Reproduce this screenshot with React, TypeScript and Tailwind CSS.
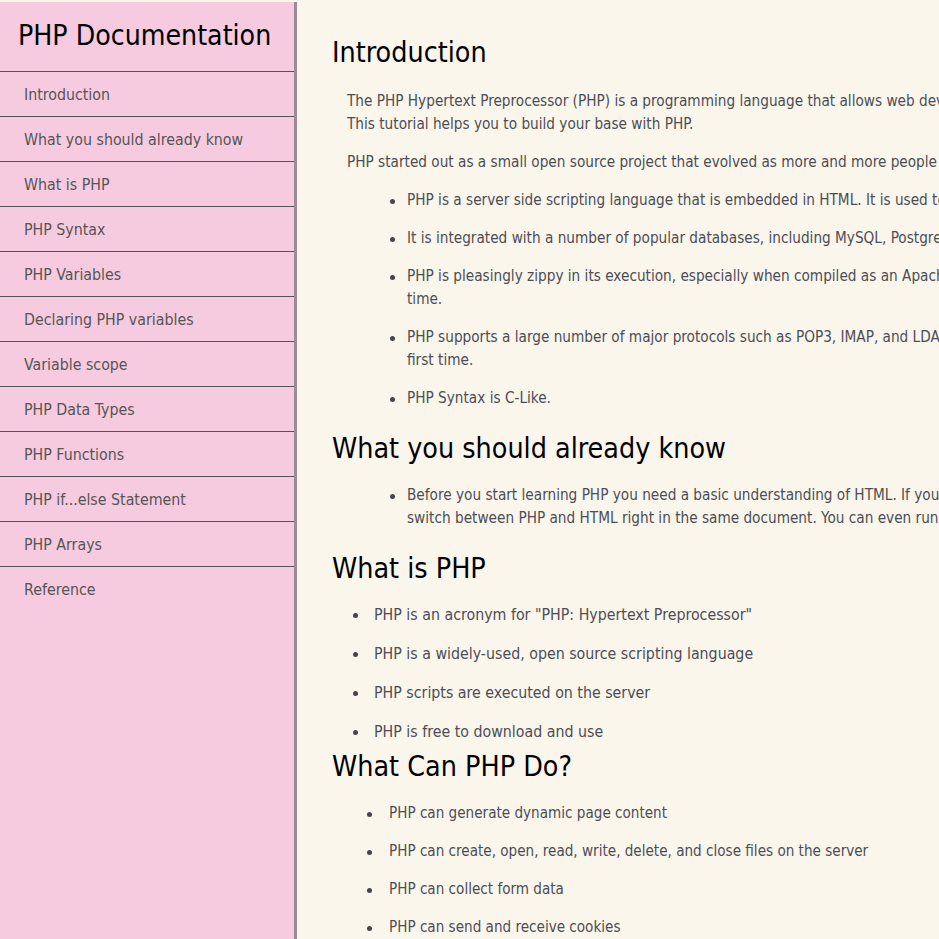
import React from "react";

const navItems = [
  "Introduction",
  "What you should already know",
  "What is PHP",
  "PHP Syntax",
  "PHP Variables",
  "Declaring PHP variables",
  "Variable scope",
  "PHP Data Types",
  "PHP Functions",
  "PHP if...else Statement",
  "PHP Arrays",
  "Reference",
];

function Item({
  col,
  className,
  children,
}: {
  col: string;
  className?: string;
  children: React.ReactNode;
}) {
  return (
    <li className={`flex ${className ?? ""}`}>
      <span className={`${col} shrink-0`}>
        <span className="mt-[10px] block h-[5px] w-[5px] rounded-full bg-[#45454d]" />
      </span>
      <span>{children}</span>
    </li>
  );
}

export default function App() {
  return (
    <div
      className="flex h-[939px] w-[939px] overflow-hidden bg-[#faf6ec]"
      style={{ fontFamily: '"DejaVu Sans Condensed", "DejaVu Sans", sans-serif' }}
    >
      <nav className="mt-[2px] w-[297px] shrink-0 border-r-[3px] border-[#9b8b98] bg-[#f6cbe0]">
        <header className="flex h-[69px] items-center pl-[18px] text-[28.2px] text-black">
          PHP Documentation
        </header>
        {navItems.map((item) => (
          <a
            key={item}
            href="#"
            className="flex h-[45px] items-center border-t border-[#55535a] pl-[24px] pt-[2px] text-[15.8px] text-[#555]"
          >
            {item}
          </a>
        ))}
      </nav>

      <main className="w-[1400px] shrink-0 pl-[35px] pt-[35px] text-[#4d4d55]">
        <section>
          <h2 className="text-[28.4px] leading-[35px] text-black">Introduction</h2>
          <div className="whitespace-nowrap pl-[15px] pt-[20px] text-[15.2px] leading-[23px]">
            <p>
              The PHP Hypertext Preprocessor (PHP) is a programming language that allows web developers to create dynamic content that interacts with databases.
              <br />
              This tutorial helps you to build your base with PHP.
            </p>
            <p className="mt-[15px]">
              PHP started out as a small open source project that evolved as more and more people found out how useful it was.
            </p>
            <ul className="mt-[15px] pl-[43px]">
              <Item col="w-[17px]" className="mb-[15px]">
                PHP is a server side scripting language that is embedded in HTML. It is used to manage dynamic content, databases, session tracking, even build entire e-commerce sites.
              </Item>
              <Item col="w-[17px]" className="mb-[15px]">
                It is integrated with a number of popular databases, including MySQL, PostgreSQL, Oracle, Sybase, Informix, and Microsoft SQL Server.
              </Item>
              <Item col="w-[17px]" className="mb-[15px]">
                PHP is pleasingly zippy in its execution, especially when compiled as an Apache module on the Unix side. The MySQL server, once started, executes even very complex queries with huge result sets in record-setting
                <br />
                time.
              </Item>
              <Item col="w-[17px]" className="mb-[15px]">
                PHP supports a large number of major protocols such as POP3, IMAP, and LDAP. PHP4 added support for Java and distributed object architectures (COM and CORBA), making n-tier development a possibility for the
                <br />
                first time.
              </Item>
              <Item col="w-[17px]">PHP Syntax is C-Like.</Item>
            </ul>
          </div>
        </section>

        <section className="mt-[21px]">
          <h2 className="text-[28.4px] leading-[35px] text-black">What you should already know</h2>
          <div className="whitespace-nowrap pl-[15px] pt-[18px] text-[15.2px] leading-[23px]">
            <ul className="pl-[43px]">
              <Item col="w-[17px]">
                Before you start learning PHP you need a basic understanding of HTML. If you know HTML, you can easily embed PHP code within it and
                <br />
                switch between PHP and HTML right in the same document. You can even run PHP scripts from the command line.
              </Item>
            </ul>
          </div>
        </section>

        <section className="mt-[21px]">
          <h2 className="text-[28.4px] leading-[35px] text-black">What is PHP</h2>
          <ul className="whitespace-nowrap pl-[21px] pt-[17px] text-[15.8px] leading-[23px]">
            <Item col="w-[21px]" className="mb-[16px]">PHP is an acronym for &quot;PHP: Hypertext Preprocessor&quot;</Item>
            <Item col="w-[21px]" className="mb-[16px]">PHP is a widely-used, open source scripting language</Item>
            <Item col="w-[21px]" className="mb-[16px]">PHP scripts are executed on the server</Item>
            <Item col="w-[21px]">PHP is free to download and use</Item>
          </ul>
        </section>

        <section className="mt-[6px]">
          <h2 className="text-[28.4px] leading-[35px] text-black">What Can PHP Do?</h2>
          <ul className="whitespace-nowrap pl-[35px] pt-[18px] text-[15.1px] leading-[23px]">
            <Item col="w-[22px]" className="mb-[15px]">PHP can generate dynamic page content</Item>
            <Item col="w-[22px]" className="mb-[15px]">PHP can create, open, read, write, delete, and close files on the server</Item>
            <Item col="w-[22px]" className="mb-[15px]">PHP can collect form data</Item>
            <Item col="w-[22px]" className="mb-[15px]">PHP can send and receive cookies</Item>
            <Item col="w-[22px]" className="mb-[15px]">PHP can add, delete, modify data in your database</Item>
            <Item col="w-[22px]">PHP can be used to control user-access</Item>
          </ul>
        </section>
      </main>
    </div>
  );
}
